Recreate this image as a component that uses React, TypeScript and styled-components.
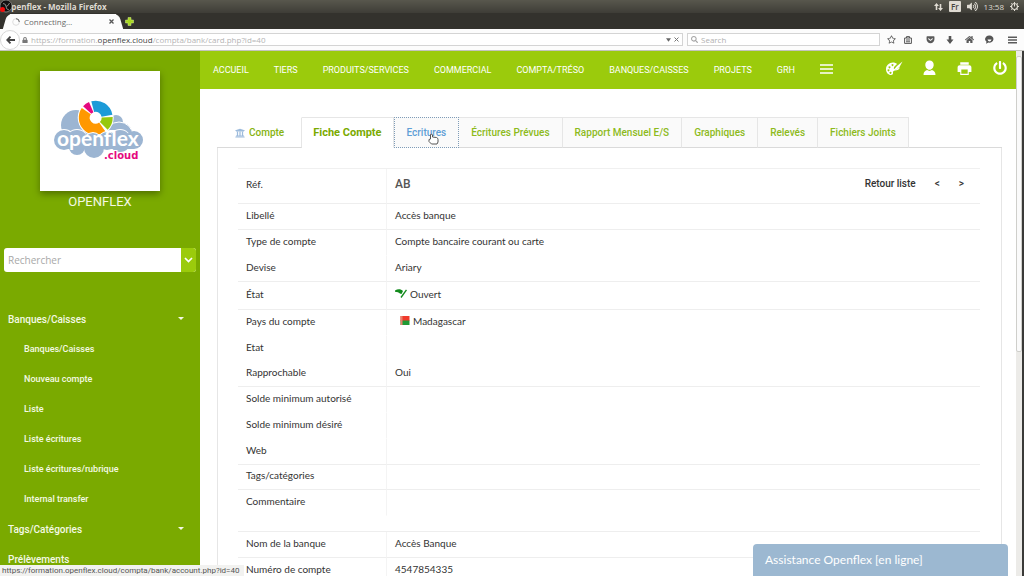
import React from "react";
import styled, { createGlobalStyle } from "styled-components";
import { FaUniversity, FaHome, FaGetPocket, FaPowerOff, FaRegStar, FaLock, FaVolumeUp, FaSearch } from "react-icons/fa";
import { IoMdPrint } from "react-icons/io";

const roboto = `Roboto, "Liberation Sans", sans-serif`;
const noto = `"Open Sans", "Noto Sans", sans-serif`;
const lato = `Lato, "Open Sans", sans-serif`;

const GlobalStyle = createGlobalStyle`
  * { box-sizing: border-box; }
  body { margin: 0; background: #fff; font-family: ${roboto}; }
  button, input { font: inherit; border: 0; padding: 0; margin: 0; background: none; }
  a { color: inherit; text-decoration: none; }
  ul { list-style: none; margin: 0; padding: 0; }
`;

const Window = styled.div`
  display: flex;
  flex-direction: column;
  height: 100vh;
  overflow: hidden;
`;

/* ---------- Desktop bar ---------- */
const TitleBar = styled.div`
  position: relative;
  display: flex;
  align-items: center;
  justify-content: space-between;
  height: 13px;
  flex: none;
  padding: 0 5px;
  background: linear-gradient(#58574d, #3e3d37);
  color: #dfdbd2;
  font: 8px/12px ${noto};
`;
const WindowTitle = styled.strong`
  font-weight: 700;
`;
const RecorderBadge = styled.svg`
  position: absolute;
  left: 0;
  top: 0;
`;
const Tray = styled.div`
  display: flex;
  align-items: center;
  gap: 6px;
`;
const Lang = styled.span`
  padding: 0 2px;
  border-radius: 1px;
  background: #dfdbd2;
  color: #45443e;
  font-weight: 600;
  line-height: 11px;
`;

/* ---------- Browser chrome ---------- */
const TabStrip = styled.div`
  display: flex;
  align-items: center;
  gap: 9px;
  height: 16px;
  flex: none;
  padding-left: 10px;
  background: #33322d;
`;
const BrowserTab = styled.div`
  position: relative;
  display: flex;
  align-items: center;
  align-self: flex-end;
  gap: 4px;
  width: 106px;
  height: 15px;
  padding: 0 2px;
  background: #fcfcfc;
  color: #6b6b6b;
  font: 8px/14px ${noto};
  &::before, &::after {
    content: "";
    position: absolute;
    top: 0;
    width: 12px;
    height: 15px;
    background: #fcfcfc;
  }
  &::before { left: -5px; border-radius: 5px 0 0 0; transform: skewX(-16deg); }
  &::after { right: -5px; border-radius: 0 5px 0 0; transform: skewX(16deg); }
  > * { position: relative; z-index: 1; }
`;
const TabLabel = styled.span`
  flex: 1;
`;
const IconButton = styled.button`
  display: flex;
  align-items: center;
  justify-content: center;
  color: #5a5a5a;
`;
const NavBar = styled.div`
  display: flex;
  align-items: center;
  height: 22px;
  flex: none;
  padding-right: 7px;
  border-bottom: 1px solid #c3c3be;
  background: #fcfcfc;
`;
const BackButton = styled(IconButton)`
  width: 20px;
  height: 20px;
  flex: none;
  border: 1px solid #d8d8d8;
  border-radius: 50%;
  background: #fff;
`;
const UrlField = styled.div`
  display: flex;
  align-items: center;
  flex: 1;
  gap: 3px;
  height: 13px;
  padding: 0 3px 0 2px;
  border: 1px solid #d4d4d4;
  border-left: 0;
  background: #fff;
  color: #b4b4b4;
  font: 8px/11px ${noto};
`;
const UrlText = styled.span`
  flex: 1;
  b { font-weight: 400; color: #444; }
`;
const WebSearch = styled.label`
  display: flex;
  align-items: center;
  gap: 3px;
  width: 193px;
  height: 13px;
  margin: 0 7px 0 4px;
  padding: 0 3px;
  border: 1px solid #d4d4d4;
  background: #fff;
  color: #a5a5a5;
  font: 8px/11px ${noto};
  input { flex: 1; min-width: 0; }
  input::placeholder { color: #b0b0b0; opacity: 1; }
`;
const BrowserActions = styled.div`
  display: flex;
  align-items: center;
  justify-content: space-between;
  width: 130px;
`;
const ActionGroup = styled.div<{ $gap?: number }>`
  display: flex;
  align-items: center;
  gap: ${(p) => p.$gap ?? 0}px;
`;

/* ---------- Page ---------- */
const Viewport = styled.div`
  position: relative;
  display: flex;
  flex: 1;
  min-height: 0;
  overflow: hidden;
`;
const Sidebar = styled.aside`
  display: flex;
  flex-direction: column;
  align-items: center;
  width: 200px;
  flex: none;
  padding-top: 20px;
  background: #7aaa00;
  color: #f4f9e4;
`;
const LogoCard = styled.div`
  width: 120px;
  height: 120px;
  flex: none;
  background: #fff;
  box-shadow: 0 3px 7px rgba(0, 0, 0, 0.35);
`;
const Company = styled.div`
  font-size: 13px;
  line-height: 22px;
`;
const SideSearch = styled.form`
  display: flex;
  align-self: stretch;
  height: 24px;
  flex: none;
  margin: 35px 4px 32px 4px;
  border-radius: 3px;
  background: #fff;
  overflow: hidden;
  input {
    flex: 1;
    min-width: 0;
    padding-left: 4px;
    font: 10px/24px ${noto};
  }
  input::placeholder { color: #a8a8a8; opacity: 1; }
`;
const SideSearchButton = styled(IconButton)`
  width: 15px;
  background: #9bcb0c;
  color: #fff;
`;
const SideMenu = styled.ul`
  align-self: stretch;
  font-weight: 500;
`;
const SideItem = styled.li<{ $sub?: boolean }>`
  a {
    display: flex;
    align-items: center;
    justify-content: space-between;
    height: 30px;
    padding: 0 16px 0 ${(p) => (p.$sub ? 24 : 8)}px;
    font-size: ${(p) => (p.$sub ? 9 : 10)}px;
  }
`;
const Content = styled.div`
  display: flex;
  flex-direction: column;
  flex: 1;
  min-width: 0;
`;
const TopNav = styled.header`
  display: flex;
  align-items: center;
  justify-content: space-between;
  height: 38px;
  flex: none;
  padding: 0 8px 0 13px;
  background: #9bcb0c;
  color: #fff;
`;
const NavLinks = styled.nav`
  display: flex;
  align-items: center;
  gap: 25px;
  font-size: 9px;
  button { color: #fff; padding-bottom: 3px; }
`;
const NavTools = styled.div`
  display: flex;
  align-items: center;
  gap: 18px;
  padding-bottom: 4px;
  button { width: 17px; color: #fff; }
`;
const Main = styled.main`
  padding: 28px 14px 0 17px;
`;
const Tabs = styled.nav`
  display: flex;
  height: 31px;
`;
const Tab = styled.a<{ $state?: "first" | "active" | "hover" }>`
  position: relative;
  display: flex;
  align-items: center;
  gap: 4px;
  padding: 0 12px;
  border: 1px solid #e6e6e6;
  border-left-width: 0;
  border-bottom-color: #dadada;
  background: #fafafa;
  color: #8dba1c;
  font-size: 10px;
  font-weight: 500;
  ${(p) => p.$state === "first" && `padding: 0 17px 0 18px; border-top-color: transparent; background: #fff; color: #86b30f;`}
  ${(p) => p.$state === "active" && `padding: 0 11px; border-bottom-color: #fff; background: #fff; color: #7aaa00; font-size: 11px; font-weight: 700;`}
  ${(p) => p.$state === "hover" && `border: 1px dotted #7f9cb8; color: #5f9fd6;`}
`;
const TabsRest = styled.span`
  flex: 1;
  border-bottom: 1px solid #dadada;
`;
const Pointer = styled.svg`
  position: absolute;
  left: 33px;
  top: 15px;
`;
const Panel = styled.section`
  padding: 20px 21px 0 20px;
  border: 1px solid #e6e6e6;
  border-width: 0 1px;
`;
const Details = styled.table`
  width: 100%;
  table-layout: fixed;
  border-spacing: 0;
  border-top: 1px solid #f0f0f0;
  color: #333;
  font: 10px/14px ${lato};
`;
const Row = styled.tr<{ $height: number; $line?: boolean }>`
  height: ${(p) => p.$height}px;
  th, td {
    padding: 0 8px 4px;
    border-bottom: 1px solid ${(p) => (p.$line ? "#eeeeee" : "transparent")};
    text-align: left;
    font-weight: 400;
    white-space: nowrap;
  }
  th { border-right: 1px solid #f4f4f4; }
`;
const Spacer = styled.tr`
  height: 16px;
  td { padding: 0; border-bottom: 1px solid #eeeeee; }
`;
const Cell = styled.div`
  display: flex;
  align-items: center;
  gap: 3px;
`;
const Reference = styled.span`
  flex: 1;
  color: #555;
  font: 500 12px/16px ${roboto};
`;
const Pager = styled.span`
  display: flex;
  gap: 19px;
  padding-right: 8px;
  color: #333;
  font: 500 10px/14px ${roboto};
`;
const ScrollTrack = styled.div`
  display: flex;
  flex-direction: column;
  width: 8px;
  flex: none;
  padding: 5px 0 0;
  border-right: 2px solid #3a3a38;
  background: #ecebe8;
`;
const ScrollThumb = styled.div`
  height: 57%;
  border: 1px solid #cfcfcb;
  border-radius: 2px;
  background: #fafafa;
`;
const StatusLink = styled.div`
  position: absolute;
  left: 0;
  bottom: 0;
  padding: 0 4px 0 2px;
  background: #f2f2f0;
  color: #555;
  font: 8px/11px ${roboto};
`;
const ChatButton = styled.button`
  position: absolute;
  right: 16px;
  bottom: 0;
  width: 255px;
  height: 32px;
  padding-left: 12px;
  border-radius: 4px 4px 0 0;
  background: #9cb8d1;
  color: #fff;
  font: 12px/32px ${lato};
  text-align: left;
`;

const Logo = () => (
  <svg width="120" height="120" viewBox="0 0 120 120" role="img" aria-label="openflex.cloud">
    <g fill="#9cb5d2">
      <circle cx="36" cy="54" r="15" />
      <circle cx="76" cy="51" r="7" />
      <circle cx="79" cy="65" r="14" stroke="#fff" />
    </g>
    <circle cx="55.700" cy="46.700" r="18" fill="#fff" />
    <g fill="none" strokeWidth="11">
      <path d="M52.700 35.600A11.500 11.500 0 0 1 67 44.700" stroke="#1c9bd8" />
      <path d="M67.200 46.200A11.500 11.500 0 0 1 63.800 54.800" stroke="#97c80e" />
      <path d="M62.300 56.100A11.500 11.500 0 0 1 46.300 40.100" stroke="#ff9800" />
      <path d="M47.200 39A11.500 11.500 0 0 1 51.200 36.100" stroke="#e5097f" />
    </g>
    <g fill="#fff">
      <circle cx="24" cy="69" r="11" />
      <circle cx="37" cy="69" r="11" />
      <circle cx="53" cy="70" r="9" />
      <circle cx="67" cy="69" r="9" />
      <circle cx="80" cy="69" r="11" />
    </g>
    <g fill="#9cb5d2">
      <circle cx="24" cy="69" r="10" />
      <circle cx="37" cy="70" r="11" />
      <circle cx="37" cy="76" r="8" />
      <circle cx="53" cy="71" r="9" />
      <circle cx="54" cy="77" r="10" />
      <circle cx="67" cy="70" r="9" />
      <circle cx="80" cy="70" r="11" />
      <circle cx="94" cy="69" r="9" />
      <rect x="24" y="66" width="70" height="12" />
    </g>
    <text x="17" y="75" fill="#fff" fontFamily="Lato, sans-serif" fontWeight="700" fontSize="21">openflex</text>
    <text x="64" y="88" fill="#e5097f" stroke="#fff" strokeWidth="2" paintOrder="stroke" fontFamily="DejaVu Sans, sans-serif" fontWeight="700" fontSize="10">.cloud</text>
  </svg>
);

const Caret = () => (
  <svg width="6" height="4" viewBox="0 0 6 4" aria-hidden="true"><path d="M0 0h6L3 3z" fill="currentColor" /></svg>
);

const HandPointer = () => (
  <Pointer width="11" height="12" viewBox="0 0 11 12" aria-hidden="true">
    <path d="M2.500 1.500q1.500-1 2 .5v2l4 .5q1.500.5 1.500 2V9l-1 2H3.500L1 8.500V6.500l1.500-.5z" fill="#fff" stroke="#555" />
  </Pointer>
);

const Palette = () => (
  <svg width="17" height="15" viewBox="0 0 17 15" aria-hidden="true">
    <path fill="currentColor" fillRule="evenodd" d="M7 1.500C3 1.500 0 4.500 0 8.200 0 11.500 2.200 14 5 14c1.800 0 2.200-1 2-2.200-.2-1.400.6-2.200 2-2.300 2.500-.1 4.500-.8 4.800-3.300L10 8.500 7.800 7.800 8 6l3-3C10 2 8.500 1.500 7 1.500zM3.500 5.300a1 1 0 1 0 .01 0zM6.500 3a1 1 0 1 0 .01 0zM2.500 8.300a1 1 0 1 0 .01 0zM4.500 10.800a1 1 0 1 0 .01 0z" />
    <path d="M8 8.500L11 5 16.500.5 13.500 6l-3 2.500z" fill="currentColor" />
  </svg>
);

const Person = () => (
  <svg width="13" height="16" viewBox="0 0 13 16" aria-hidden="true">
    <path fill="currentColor" d="M6.500.5c2.600 0 4.200 1.900 4.200 4.300S9 9.800 6.500 9.800 2.300 7.200 2.300 4.800 3.900.5 6.500.5zM.5 15c0-2.600 1.400-4.300 3.500-4.900.7.500 1.600.8 2.500.8s1.800-.3 2.500-.8c2.100.6 3.500 2.300 3.500 4.900z" />
  </svg>
);

const MenuBars = ({ size = 13 }: { size?: number }) => (
  <svg width={size} height="10" viewBox="0 0 13 10" aria-hidden="true">
    <path d="M0 1h13M0 5h13M0 9h13" stroke="currentColor" strokeWidth={size < 12 ? 2.2 : 1.4} />
  </svg>
);

const navItems = ["ACCUEIL", "TIERS", "PRODUITS/SERVICES", "COMMERCIAL", "COMPTA/TRÉSO", "BANQUES/CAISSES", "PROJETS", "GRH"];

const sideItems: { label: string; sub?: boolean; caret?: boolean }[] = [
  { label: "Banques/Caisses", caret: true },
  { label: "Banques/Caisses", sub: true },
  { label: "Nouveau compte", sub: true },
  { label: "Liste", sub: true },
  { label: "Liste écritures", sub: true },
  { label: "Liste écritures/rubrique", sub: true },
  { label: "Internal transfer", sub: true },
  { label: "Tags/Catégories", caret: true },
  { label: "Prélèvements" },
];

const OpenMark = () => (
  <svg width="12" height="9" viewBox="0 0 12 9" aria-hidden="true">
    <path d="M0 1.500C3-.5 6 0 8 2L6.500 5C5 5 4 4 3 3.300 2 3 1 3 0 2.800z" fill="#128a1c" />
    <path d="M11.500.8L6 8.500" stroke="#128a1c" strokeWidth="1.400" />
  </svg>
);

const Flag = () => (
  <svg width="15" height="9" viewBox="0 0 15 9" aria-hidden="true">
    <path d="M5.500 0h9v5h-9z" fill="#f03a2c" />
    <path d="M5.500 4.500h9V9h-9z" fill="#1f9a35" />
    <path d="M5.500 0h2v9h-2z" fill="#e8806c" />
  </svg>
);

const rows: { label: string; value?: React.ReactNode; height: number; line?: boolean }[] = [
  { label: "Libellé", value: "Accès banque", height: 26, line: true },
  { label: "Type de compte", value: "Compte bancaire courant ou carte", height: 26 },
  { label: "Devise", value: "Ariary", height: 26, line: true },
  { label: "État", value: <Cell><OpenMark />Ouvert</Cell>, height: 28, line: true },
  { label: "Pays du compte", value: <Cell><Flag />Madagascar</Cell>, height: 26 },
  { label: "Etat", height: 26 },
  { label: "Rapprochable", value: "Oui", height: 25, line: true },
  { label: "Solde minimum autorisé", height: 26 },
  { label: "Solde minimum désiré", height: 26 },
  { label: "Web", height: 26, line: true },
  { label: "Tags/catégories", height: 25, line: true },
  { label: "Commentaire", height: 26 },
];

const bankRows = [
  { label: "Nom de la banque", value: "Accès Banque" },
  { label: "Numéro de compte", value: "4547854335" },
];

export default function App() {
  return (
    <Window>
      <GlobalStyle />
      <TitleBar>
        <WindowTitle>Openflex - Mozilla Firefox</WindowTitle>
        <RecorderBadge width="13" height="13" viewBox="0 0 13 13" aria-hidden="true">
          <circle cx="6" cy="6" r="6" fill="#111" stroke="#999" strokeWidth=".7" />
          <path d="M3 3.500q3 0 3 3M9.500 3q-1 3-3.500 3.500M6 6.500q0 3 3 3.500" stroke="#888" fill="none" />
          <circle cx="2.500" cy="9.500" r="2.500" fill="#f20d0d" />
        </RecorderBadge>
        <Tray>
          <svg width="9" height="8" viewBox="0 0 9 8" aria-hidden="true">
            <path d="M2.500 0L5 3H3.300v4H1.700V3H0zM6.500 8L4 5h1.700V1h1.600v4H9z" fill="currentColor" />
          </svg>
          <Lang>Fr</Lang>
          <FaVolumeUp size={11} />
          <span>13:58</span>
          <svg width="9" height="9" viewBox="0 0 9 9" fill="none" stroke="currentColor" aria-hidden="true">
            <circle cx="4.500" cy="4.500" r="3" strokeWidth="1.200" />
            <path d="M4.500 0v4.500M0 4.500h1.500M7.500 4.500H9M1.300 1.300l1 1M7.700 1.300l-1 1M1.300 7.700l1-1M7.700 7.700l-1-1M4.500 7.500V9" />
          </svg>
        </Tray>
      </TitleBar>

      <TabStrip>
        <BrowserTab>
          <svg width="8" height="8" viewBox="0 0 8 8" fill="none" aria-hidden="true">
            <circle cx="4" cy="4" r="3.300" stroke="#ddd" />
            <path d="M4 .7A3.300 3.300 0 0 1 7.300 4" stroke="#666" />
          </svg>
          <TabLabel>Connecting…</TabLabel>
          <IconButton aria-label="Close tab">
            <svg width="5" height="5" viewBox="0 0 5 5"><path d="M.5.5l4 4M4.500.5l-4 4" stroke="#555" strokeWidth="1.300" /></svg>
          </IconButton>
        </BrowserTab>
        <IconButton aria-label="New tab">
          <svg width="9" height="9" viewBox="0 0 9 9"><path d="M3 .5h3V3h2.500v3H6v2.500H3V6H.5V3H3z" fill="#a8d820" stroke="#d4ee88" strokeWidth=".5" /></svg>
        </IconButton>
      </TabStrip>

      <NavBar>
        <BackButton aria-label="Back">
          <svg width="9" height="8" viewBox="0 0 9 8" fill="none" stroke="#444" strokeWidth="1.800"><path d="M4.500.6L1.200 4l3.300 3.400M1.500 4H9" /></svg>
        </BackButton>
        <UrlField>
          <FaLock size={6} color="#777" />
          <UrlText>https://formation.<b>openflex.cloud</b>/compta/bank/card.php?id=40</UrlText>
          <IconButton aria-label="History"><svg width="5" height="4" viewBox="0 0 6 4"><path d="M0 0h6L3 4z" fill="#666" /></svg></IconButton>
          <IconButton aria-label="Stop"><svg width="5" height="5" viewBox="0 0 5 5"><path d="M.5.5l4 4M4.500.5l-4 4" stroke="#777" /></svg></IconButton>
        </UrlField>
        <WebSearch>
          <FaSearch size={7} />
          <input aria-label="Web search" placeholder="Search" />
        </WebSearch>
        <BrowserActions>
          <ActionGroup $gap={8}>
            <IconButton aria-label="Bookmark"><FaRegStar size={9} /></IconButton>
            <IconButton aria-label="Bookmarks list">
              <svg width="8" height="8" viewBox="0 0 8 8" fill="none" stroke="#555"><path d="M.6 2h6.800v5.400H.6zM2.500 2V.6h3V2M2 4h4M2 5.800h4" /></svg>
            </IconButton>
          </ActionGroup>
          <ActionGroup $gap={11}>
            <IconButton aria-label="Pocket"><FaGetPocket size={9} /></IconButton>
            <IconButton aria-label="Downloads">
              <svg width="8" height="8" viewBox="0 0 8 8"><path d="M2.700 0h2.600v3.500h2.200L4 8 .5 3.500h2.200z" fill="#555" /></svg>
            </IconButton>
            <IconButton aria-label="Home"><FaHome size={9} /></IconButton>
            <IconButton aria-label="Chat">
              <svg width="9" height="9" viewBox="0 0 9 9"><path d="M4.500.5a4 3.600 0 1 1-1 7.100L1 8.800l.5-2A4 3.600 0 0 1 4.500.5z" fill="#555" /><path d="M2.500 4.500h4q-.5 2-2 2t-2-2z" fill="#fff" /></svg>
            </IconButton>
          </ActionGroup>
          <IconButton aria-label="Menu"><MenuBars size={9} /></IconButton>
        </BrowserActions>
      </NavBar>

      <Viewport>
        <Sidebar>
          <LogoCard><Logo /></LogoCard>
          <Company>OPENFLEX</Company>
          <SideSearch>
            <input aria-label="Rechercher" placeholder="Rechercher" />
            <SideSearchButton type="button" aria-label="Options de recherche">
              <svg width="9" height="6" viewBox="0 0 9 6" fill="none" stroke="#fff" strokeWidth="1.700"><path d="M1 1l3.500 3.500L8 1" /></svg>
            </SideSearchButton>
          </SideSearch>
          <SideMenu>
            {sideItems.map((item, i) => (
              <SideItem key={i} $sub={item.sub}>
                <a href="#menu">{item.label}{item.caret && <Caret />}</a>
              </SideItem>
            ))}
          </SideMenu>
        </Sidebar>

        <Content>
          <TopNav>
            <NavLinks>
              {navItems.map((n) => <a key={n} href="#nav">{n}</a>)}
              <IconButton aria-label="Plus"><MenuBars /></IconButton>
            </NavLinks>
            <NavTools>
              <IconButton aria-label="Thème"><Palette /></IconButton>
              <IconButton aria-label="Utilisateur"><Person /></IconButton>
              <IconButton aria-label="Imprimer"><IoMdPrint size={17} /></IconButton>
              <IconButton aria-label="Déconnexion"><FaPowerOff size={14} /></IconButton>
            </NavTools>
          </TopNav>
          <Main>
            <Tabs>
              <Tab href="#compte" $state="first"><FaUniversity size={10} color="#9dbbdc" />Compte</Tab>
              <Tab href="#fiche" $state="active">Fiche Compte</Tab>
              <Tab href="#ecritures" $state="hover">Ecritures<HandPointer /></Tab>
              <Tab href="#prevues">Écritures Prévues</Tab>
              <Tab href="#rapport">Rapport Mensuel E/S</Tab>
              <Tab href="#graphiques">Graphiques</Tab>
              <Tab href="#releves">Relevés</Tab>
              <Tab href="#fichiers">Fichiers Joints</Tab>
              <TabsRest />
            </Tabs>
            <Panel>
              <Details>
                <colgroup>
                  <col width="149" />
                  <col />
                </colgroup>
                <tbody>
                  <Row $height={35} $line>
                    <th scope="row">Réf.</th>
                    <td>
                      <Cell>
                        <Reference>AB</Reference>
                        <Pager>
                          <a href="#liste">Retour liste</a>
                          <a href="#prev">&lt;</a>
                          <a href="#next">&gt;</a>
                        </Pager>
                      </Cell>
                    </td>
                  </Row>
                  {rows.map((r) => (
                    <Row key={r.label} $height={r.height} $line={r.line}>
                      <th scope="row">{r.label}</th>
                      <td>{r.value}</td>
                    </Row>
                  ))}
                  <Spacer><td colSpan={2} /></Spacer>
                  {bankRows.map((r) => (
                    <Row key={r.label} $height={26} $line>
                      <th scope="row">{r.label}</th>
                      <td>{r.value}</td>
                    </Row>
                  ))}
                </tbody>
              </Details>
            </Panel>
          </Main>
        </Content>
        <ScrollTrack><ScrollThumb /></ScrollTrack>
        <StatusLink>https://formation.openflex.cloud/compta/bank/account.php?id=40</StatusLink>
        <ChatButton>Assistance Openflex [en ligne]</ChatButton>
      </Viewport>
    </Window>
  );
}
